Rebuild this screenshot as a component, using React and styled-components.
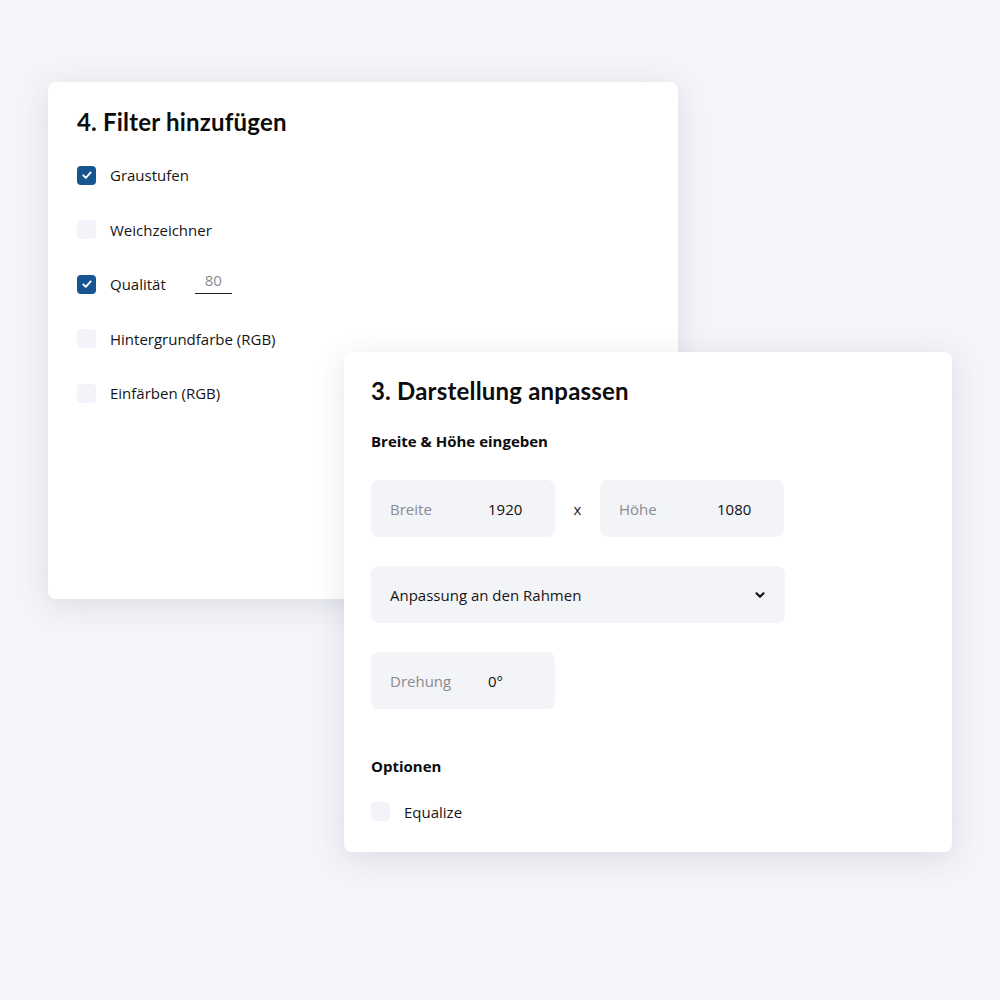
import React from 'react';
import styled, { createGlobalStyle } from 'styled-components';

const Global = createGlobalStyle`
  html, body {
    margin: 0;
    padding: 0;
    background: #f4f5f9;
    font-family: "Open Sans", "Liberation Sans", sans-serif;
    color: #111;
  }
`

const Canvas = styled.div`
  position: relative;
  width: 1000px;
  height: 1000px;
  background: #f4f5f9;
  overflow: hidden;
`

const Card = styled.div`
  position: absolute;
  left: ${p => p.x}px;
  top: ${p => p.y}px;
  width: ${p => p.w}px;
  height: ${p => p.h}px;
  box-sizing: border-box;
  background: #fff;
  border-radius: 8px;
  box-shadow: 0 6px 30px rgba(40, 50, 80, 0.12);
  display: flex;
  flex-direction: column;
  padding: ${p => p.pad};
`

const Title = styled.h2`
  margin: 0;
  font-family: Lato, "Open Sans", sans-serif;
  font-weight: 700;
  font-size: 24px;
  line-height: 30px;
  letter-spacing: 0.2px;
  color: #0d0d0d;
`

const List = styled.div`
  display: flex;
  flex-direction: column;
  margin-top: 11px;
`

const Row = styled.label`
  display: flex;
  align-items: center;
  height: ${p => p.h || 54.5}px;
  margin-top: ${p => p.mt || 0}px;
  font-size: 15px;
  color: #151515;
`

const Box = styled.span`
  width: 19px;
  height: 19px;
  border-radius: 4px;
  background: ${p => (p.checked ? '#175591' : '#f2f4f9')};
  display: inline-flex;
  align-items: center;
  justify-content: center;
  margin-right: 14px;
  flex-shrink: 0;
`

const LineInput = styled.span`
  margin-left: 29px;
  width: 37px;
  border-bottom: 1px solid #222;
  color: #8c8c8c;
  text-align: center;
  padding-bottom: 3px;
  margin-top: -4px;
`

const Sub = styled.div`
  font-weight: 700;
  font-size: 15px;
  color: #0d0d0d;
  margin-top: ${p => p.mt}px;
  line-height: 20px;
`

const Fields = styled.div`
  display: flex;
  align-items: center;
  margin-top: ${p => p.mt}px;
`

const Field = styled.div`
  width: ${p => p.w || 184}px;
  height: 57px;
  box-sizing: border-box;
  border-radius: 8px;
  background: #f3f4f8;
  display: flex;
  align-items: center;
  padding: 0 19px;
  font-size: 15px;
`

const Placeholder = styled.span`
  color: #8a8a8f;
  width: 98px;
`

const Value = styled.span`
  color: #111;
`

const Times = styled.span`
  width: 45px;
  text-align: center;
  font-size: 15px;
  color: #222;
`

const SelectText = styled.span`
  flex: 1;
  color: #151515;
`

const Check = () => (
  <svg width="12" height="12" viewBox="0 0 12 12">
    <path d="M2.3 6.3 L4.8 8.8 L9.7 3.4" fill="none" stroke="#fff" strokeWidth="1.9" strokeLinecap="round" strokeLinejoin="round" />
  </svg>
)

const Chevron = () => (
  <svg width="12" height="12" viewBox="0 0 12 12">
    <path d="M2.5 4.3 L6 7.8 L9.5 4.3" fill="none" stroke="#111" strokeWidth="2.2" strokeLinecap="round" strokeLinejoin="round" />
  </svg>
)

const filters = [
  { label: 'Graustufen', checked: true },
  { label: 'Weichzeichner' },
  { label: 'Qualität', checked: true, value: '80' },
  { label: 'Hintergrundfarbe (RGB)' },
  { label: 'Einfärben (RGB)' },
]

export default function App() {
  return (
    <>
      <Global />
      <Canvas>
        <Card x={48} y={82} w={630} h={517} pad="25px 29px">
          <Title>4. Filter hinzufügen</Title>
          <List>
            {filters.map(f => (
              <Row key={f.label}>
                <Box checked={f.checked}>{f.checked && <Check />}</Box>
                {f.label}
                {f.value && <LineInput>{f.value}</LineInput>}
              </Row>
            ))}
          </List>
        </Card>

        <Card x={344} y={352} w={608} h={500} pad="24px 27px">
          <Title>3. Darstellung anpassen</Title>
          <Sub mt={25}>Breite &amp; Höhe eingeben</Sub>
          <Fields mt={29}>
            <Field>
              <Placeholder>Breite</Placeholder>
              <Value>1920</Value>
            </Field>
            <Times>x</Times>
            <Field>
              <Placeholder>Höhe</Placeholder>
              <Value>1080</Value>
            </Field>
          </Fields>
          <Fields mt={29}>
            <Field w={414}>
              <SelectText>Anpassung an den Rahmen</SelectText>
              <Chevron />
            </Field>
          </Fields>
          <Fields mt={29}>
            <Field>
              <Placeholder>Drehung</Placeholder>
              <Value>0°</Value>
            </Field>
          </Fields>
          <Sub mt={47}>Optionen</Sub>
          <Row h={47} mt={19}>
            <Box />
            Equalize
          </Row>
        </Card>
      </Canvas>
    </>
  )
}
